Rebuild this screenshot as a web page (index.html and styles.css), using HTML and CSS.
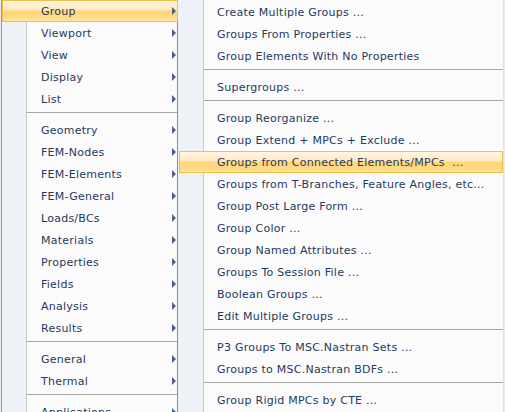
FILE: index.html
```html
<!DOCTYPE html>
<html>
<head>
<meta charset="utf-8">
<link rel="stylesheet" href="styles.css">
</head>
<body>
<div class="stage">
  <div class="menu menu-main">
    <div class="item active sub">Group</div>
    <div class="item sub">Viewport</div>
    <div class="item sub">View</div>
    <div class="item sub">Display</div>
    <div class="item sub">List</div>
    <div class="sep"></div>
    <div class="item sub">Geometry</div>
    <div class="item sub">FEM-Nodes</div>
    <div class="item sub">FEM-Elements</div>
    <div class="item sub">FEM-General</div>
    <div class="item sub">Loads/BCs</div>
    <div class="item sub">Materials</div>
    <div class="item sub">Properties</div>
    <div class="item sub">Fields</div>
    <div class="item sub">Analysis</div>
    <div class="item sub">Results</div>
    <div class="sep"></div>
    <div class="item sub">General</div>
    <div class="item sub">Thermal</div>
    <div class="sep"></div>
    <div class="item sub">Applications</div>
  </div>
  <div class="menu menu-sub">
    <div class="item">Create Multiple Groups ...</div>
    <div class="item">Groups From Properties ...</div>
    <div class="item">Group Elements With No Properties</div>
    <div class="sep"></div>
    <div class="item">Supergroups ...</div>
    <div class="sep"></div>
    <div class="item">Group Reorganize ...</div>
    <div class="item">Group Extend + MPCs + Exclude ...</div>
    <div class="item active">Groups from Connected Elements/MPCs&nbsp; ...</div>
    <div class="item">Groups from T-Branches, Feature Angles, etc...</div>
    <div class="item">Group Post Large Form ...</div>
    <div class="item">Group Color ...</div>
    <div class="item">Group Named Attributes ...</div>
    <div class="item">Groups To Session File ...</div>
    <div class="item">Boolean Groups ...</div>
    <div class="item">Edit Multiple Groups ...</div>
    <div class="sep"></div>
    <div class="item">P3 Groups To MSC.Nastran Sets ...</div>
    <div class="item">Groups to MSC.Nastran BDFs ...</div>
    <div class="sep"></div>
    <div class="item">Group Rigid MPCs by CTE ...</div>
  </div>
</div>
</body>
</html>
```

FILE: styles.css
```css
html, body {
  margin: 0;
  padding: 0;
  width: 505px;
  height: 412px;
  overflow: hidden;
  background: #ececec;
}

body {
  font-family: "DejaVu Sans", Verdana, sans-serif;
  font-size: 11px;
  letter-spacing: 0.25px;
  color: #1f3a5e;
}

.stage {
  display: flex;
  align-items: flex-start;
}

.menu {
  box-sizing: border-box;
  display: flex;
  flex-direction: column;
}

.menu-main {
  margin-left: 1px;
  margin-top: -3px;
  padding-top: 2px;
  width: 177px;
  height: 440px;
  border-left: 1px solid #9c9c9c;
  border-top: 1px solid #9c9c9c;
  background: linear-gradient(to right, #eef2f8 0 24px, #c8c8c8 24px 25px, #fbfbfb 25px);
}

.menu-sub {
  margin-left: -1px;
  margin-top: -3px;
  padding-top: 3px;
  padding-left: 1px;
  width: 327px;
  height: 440px;
  border-left: 1px solid #8c8c8c;
  border-right: 1px solid #e2e2e2;
  border-top: 1px solid #8c8c8c;
  background: linear-gradient(to right, #eef2f8 0 25px, #c8c8c8 25px 26px, #fbfbfb 26px);
}

.item {
  box-sizing: border-box;
  height: 22px;
  line-height: 20px;
  padding-top: 1px;
  border: 1px solid transparent;
  white-space: nowrap;
  position: relative;
}

.menu-main .item {
  padding-left: 38px;
}

.menu-sub .item {
  padding-left: 37px;
}

.item.active {
  border-color: #f1c049;
  background: linear-gradient(to bottom, #fff6e2 0%, #ffe9bf 45%, #ffd577 50%, #ffd880 75%, #ffe49c 100%);
}

.sub::after {
  content: "";
  position: absolute;
  right: 1px;
  top: 6px;
  width: 0;
  height: 0;
  border-left: 4px solid #4d6185;
  border-top: 4px solid transparent;
  border-bottom: 4px solid transparent;
}

.sep {
  height: 1px;
  margin: 2px 0 6px 25px;
  background: #a8a8a8;
}
```
